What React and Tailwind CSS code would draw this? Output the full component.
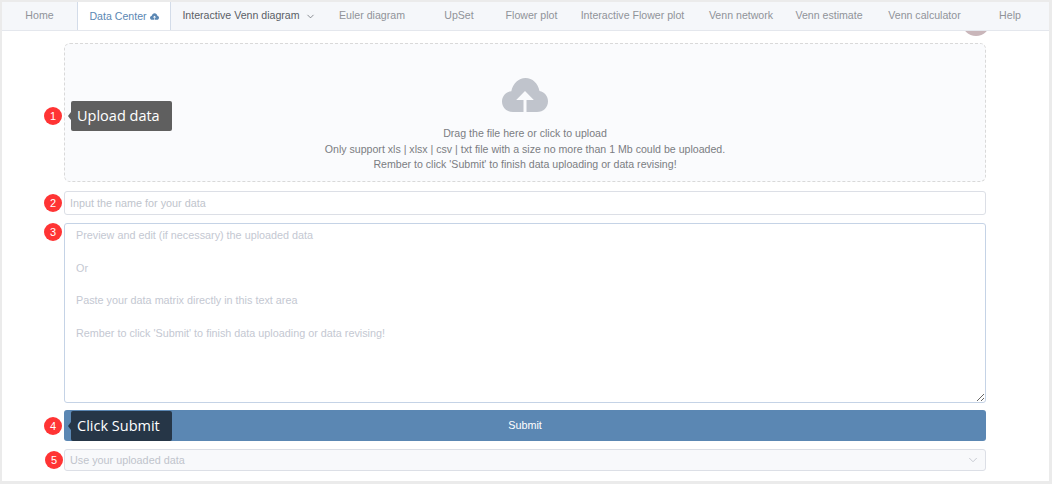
import React from 'react';
import { ChevronDown } from 'lucide-react';

const tabs = [
  { label: 'Home', w: 'w-[75px]' },
  { label: 'Data Center', w: 'w-[94px]', active: true },
  { label: 'Interactive Venn diagram', w: 'w-[156px]', dark: true, caret: true },
  { label: 'Euler diagram', w: 'w-[90px]' },
  { label: 'UpSet', w: 'w-[84px]' },
  { label: 'Flower plot', w: 'w-[61px]' },
  { label: 'Interactive Flower plot', w: 'w-[141px]' },
  { label: 'Venn network', w: 'w-[76px]' },
  { label: 'Venn estimate', w: 'w-[100px]' },
  { label: 'Venn calculator', w: 'w-[91px]' },
  { label: 'Help', w: 'w-[80px]' },
];

const cloudPath =
  'M11 34C4.5 34 0 29.5 0 23.5 0 18 4 13.8 9.3 13.2 10.8 5.5 16.5 0 23.5 0c7 0 12.6 5.4 14 13 4.9.8 8.5 5 8.5 10.3C46 29.5 41.5 34 35 34H24.5V22h7.3L23 13 14.2 22h7.3v12z';

function CloudIcon({ className }) {
  return (
    <svg viewBox="0 0 46 34" className={className}>
      <path fill="currentColor" d={cloudPath} />
    </svg>
  );
}

function Step({ n }) {
  return (
    <span className="absolute left-[-20px] top-1/2 -translate-y-1/2 w-[18px] h-[18px] rounded-full bg-[#ff3434] text-white text-[11px] leading-[18px] text-center">
      {n}
    </span>
  );
}

function Tip({ text, className, arrow }) {
  return (
    <div
      className={`absolute left-[7px] top-1/2 -translate-y-1/2 h-[30px] w-[101px] rounded-[2px] text-white text-[14.5px] leading-[30px] pl-[6px] font-['Open_Sans',sans-serif] ${className}`}
    >
      <span className={`absolute left-[-3px] top-1/2 -translate-y-1/2 w-0 h-0 border-y-[4px] border-y-transparent border-r-[3px] ${arrow}`} />
      {text}
    </div>
  );
}

export default function App() {
  return (
    <div className="w-[1052px] h-[484px] overflow-hidden bg-white font-['Liberation_Sans',Arial,sans-serif]">
      <div className="w-full h-full border-2 border-[#ebebeb] border-r-[3px] border-b-[3px] flex flex-col">
        <nav className="h-[29px] shrink-0 flex overflow-hidden bg-[#f5f7fa] border-b border-[#e4e7ed] text-[10.6px] text-[#909399] relative z-10">
          {tabs.map((t) => (
            <div
              key={t.label}
              className={`${t.w} shrink-0 flex items-center justify-center gap-[3px] whitespace-nowrap ${
                t.active ? 'h-[29px] bg-white border-x border-[#d3dce9] text-[#5b87b3]' : ''
              } ${t.dark ? 'text-[#5a5e66]' : ''}`}
            >
              {t.label}
              {t.active && <CloudIcon className="w-[9px] h-[7px] text-[#5b87b3]" />}
              {t.caret && <ChevronDown className="w-[11px] h-[11px] ml-[2px]" strokeWidth={1.5} />}
            </div>
          ))}
        </nav>

        <div className="relative flex-1">
          {/* bit of a floating button peeking out from under the nav */}
          <div className="absolute left-[960px] top-[-12px] w-[28px] h-[17px] rounded-b-full bg-[#c9b6ba]" />

          <div className="w-[922px] ml-[62px] mt-[12px] flex flex-col text-[10.8px]">
            <div className="relative h-[139px] rounded-[6px] border border-dashed border-[#d9d9d9] bg-[#fafbfd] flex flex-col items-center text-[#7b7d82]">
              <CloudIcon className="w-[46px] h-[34px] mt-[34px] text-[#c0c4cc]" />
              <p className="mt-[14px] text-[10.6px] leading-[15.5px] text-center">
                Drag the file here or click to upload
                <br />
                Only support xls | xlsx | csv | txt file with a size no more than 1 Mb could be uploaded.
                <br />
                Rember to click 'Submit' to finish data uploading or data revising!
              </p>
              <div className="absolute left-[-1px] top-[3px] w-0 h-full">
                <Step n={1} />
                <Tip text="Upload data" className="bg-[#5f5f5f]" arrow="border-r-[#5f5f5f]" />
              </div>
            </div>

            <div className="relative mt-[9px] h-[24px]">
              <input
                placeholder="Input the name for your data"
                className="w-full h-full rounded-[3px] border border-[#dcdfe6] px-[5px] outline-none placeholder:text-[#c0c4cc] bg-white"
              />
              <Step n={2} />
            </div>

            <div className="relative mt-[8px] h-[180px]">
              <textarea
                placeholder={"Preview and edit (if necessary) the uploaded data\n\nOr\n\nPaste your data matrix directly in this text area\n\nRember to click 'Submit' to finish data uploading or data revising!"}
                className="block w-full h-full rounded-[3px] border border-[#c5d3e6] pl-[11px] pr-[8px] pt-[3px] leading-[16.3px] outline-none placeholder:text-[#c4c8d2]"
              />
              <span className="absolute left-[-20px] top-0 w-[18px] h-[18px] rounded-full bg-[#ff3434] text-white text-[11px] leading-[18px] text-center">
                3
              </span>
            </div>

            <div className="relative mt-[7px] h-[31px]">
              <button className="w-full h-full rounded-[3px] bg-[#5b87b3] text-white">Submit</button>
              <Step n={4} />
              <Tip text="Click Submit" className="bg-[#263647]" arrow="border-r-[#263647]" />
            </div>

            <div className="relative mt-[8px] h-[22px] rounded-[3px] border border-[#dcdfe6] bg-[#f8f9fb] flex items-center justify-between pl-[5px] pr-[5px] text-[#c0c4cc]">
              <span>Use your uploaded data</span>
              <ChevronDown className="w-[14px] h-[14px]" strokeWidth={1.5} />
              <Step n={5} />
            </div>
          </div>
        </div>
      </div>
    </div>
  );
}
